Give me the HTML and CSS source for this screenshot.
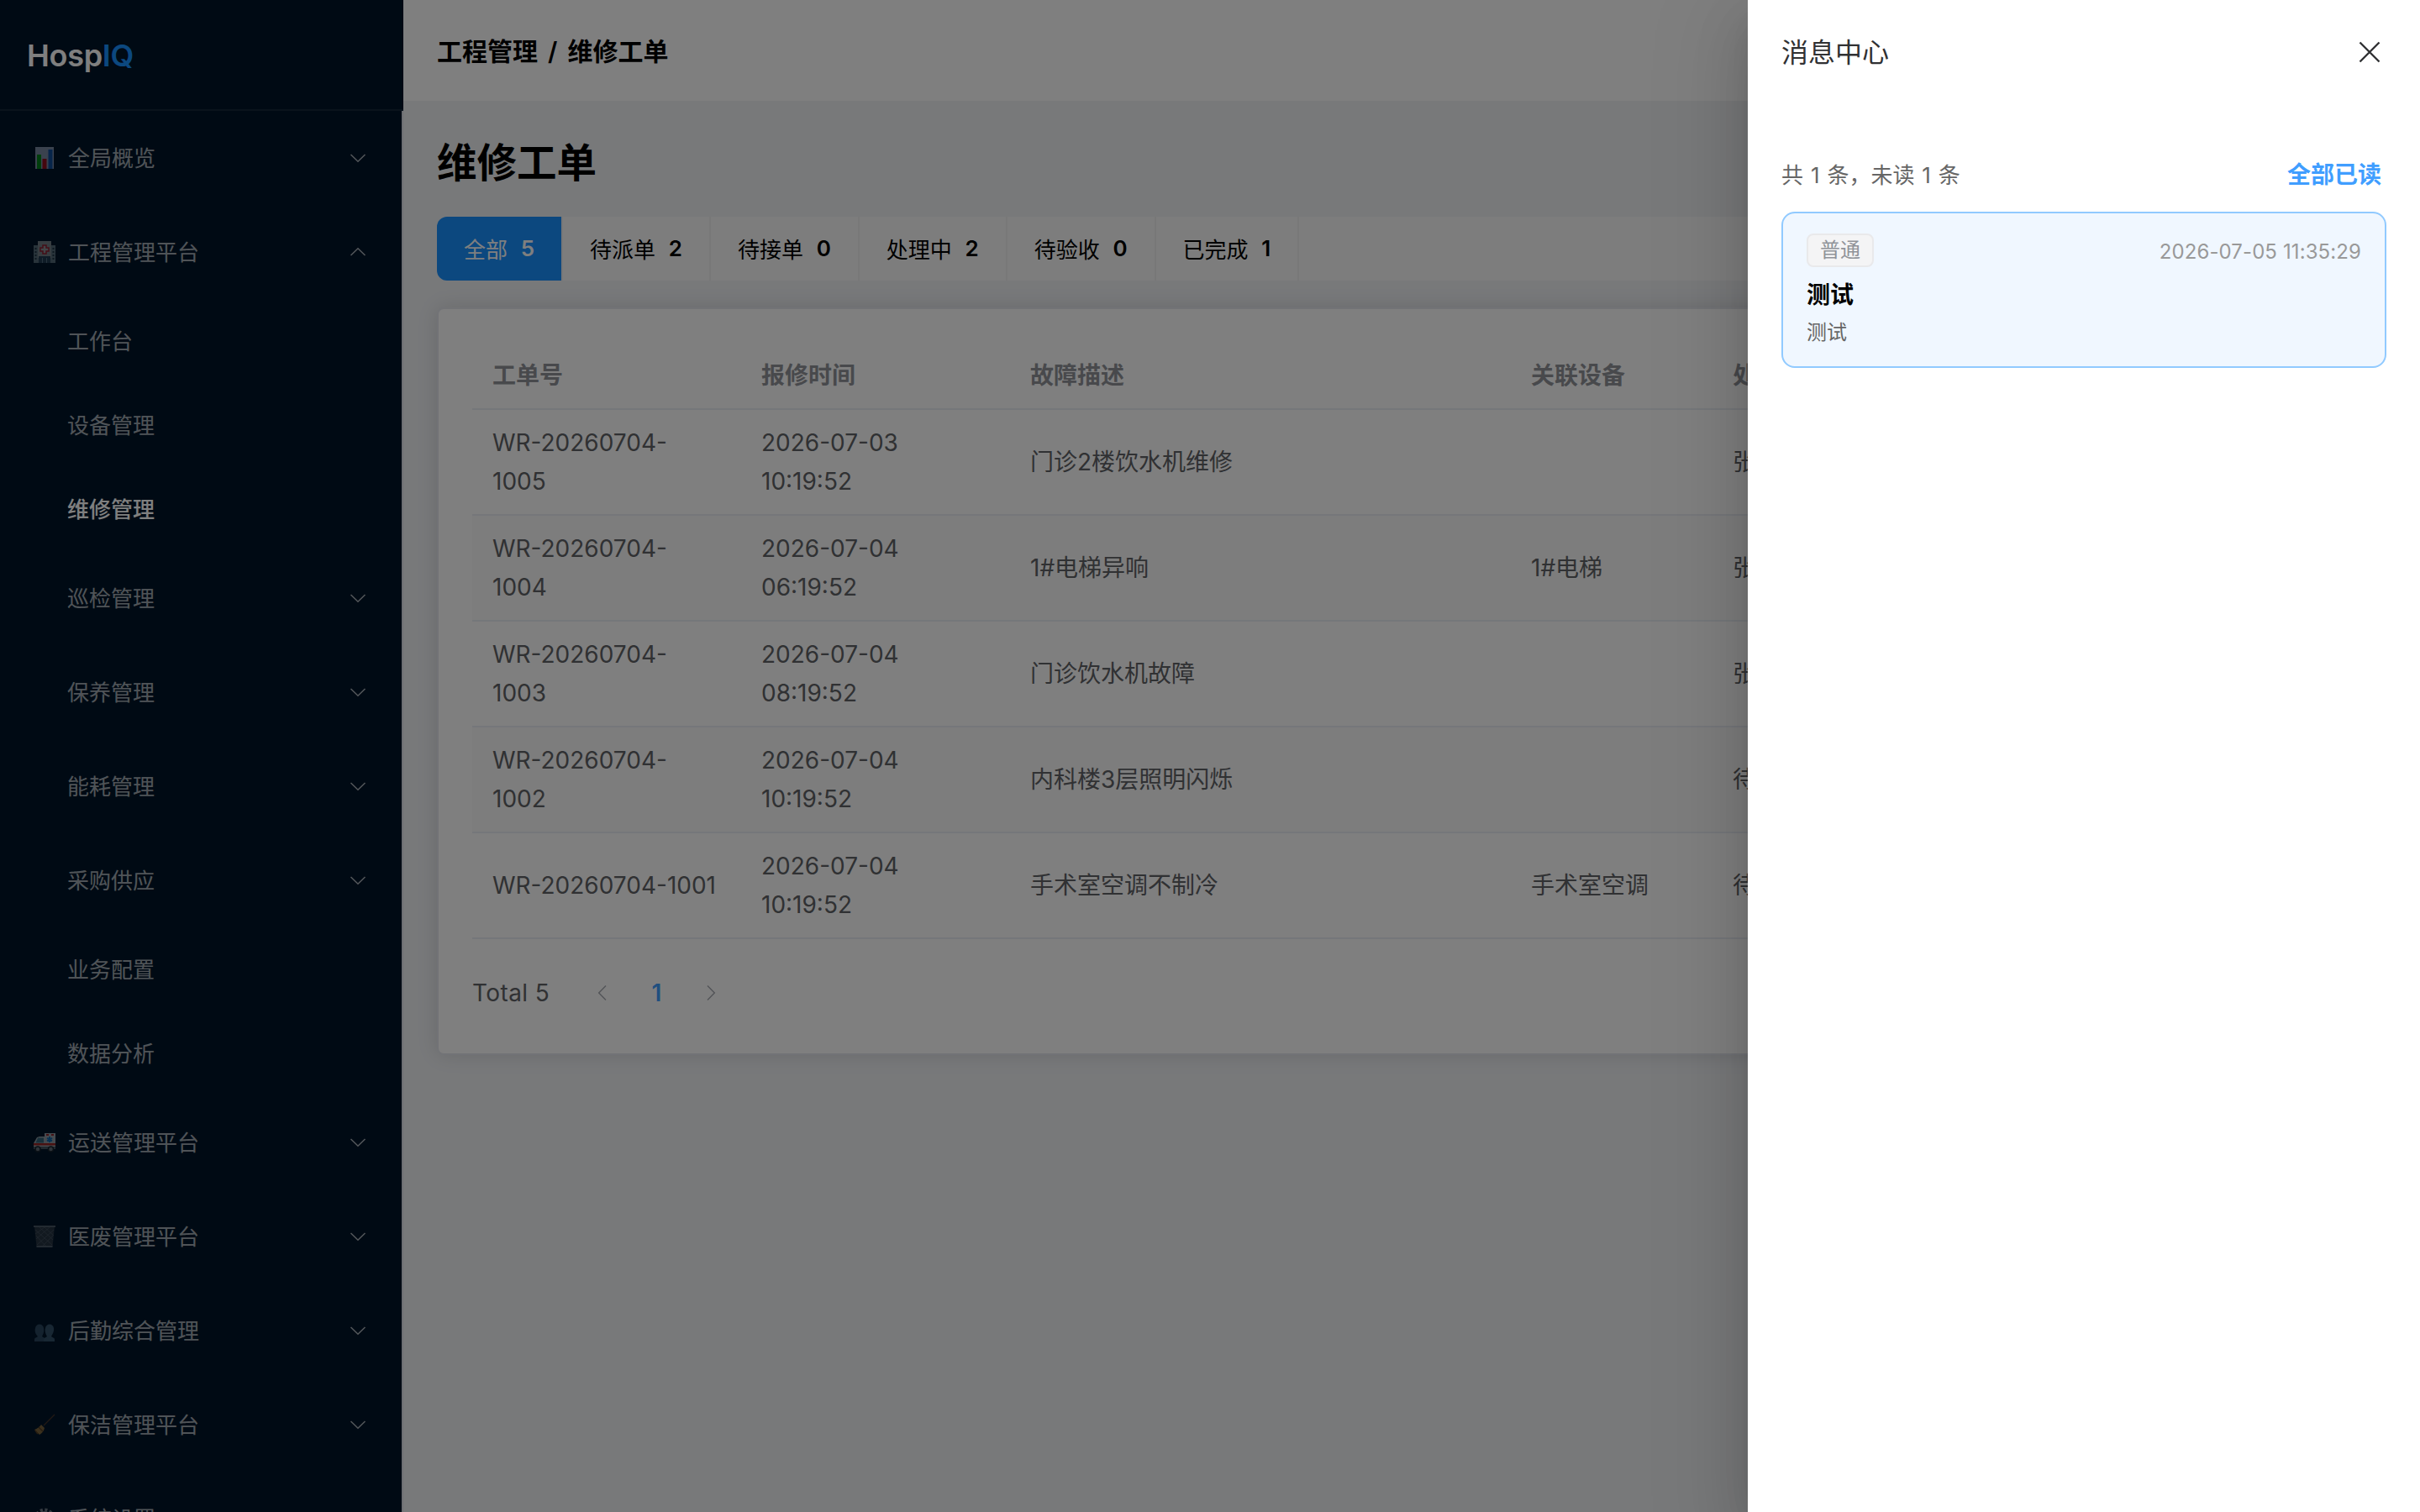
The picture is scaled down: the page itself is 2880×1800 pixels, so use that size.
FILE: index.html
```html
<!DOCTYPE html>
<html lang="zh-CN">
<head>
    <meta charset="UTF-8">
    <meta name="viewport" content="width=device-width, initial-scale=1.0">
    <title>HospIQ - 维修工单</title>
    <link rel="stylesheet" href="styles.css">
</head>
<body>
    <svg class="defs">
        <symbol id="arrow" viewBox="0 0 24 24"><path d="M3.5 8 L12 16.3 L20.5 8" fill="none" stroke="currentColor" stroke-width="1.5"/></symbol>
    </svg>
    <div class="app">
        <aside class="sidebar">
            <div class="logo">Hosp<span>IQ</span></div>
            <nav class="menu">
                <div class="menu-item top">
                    <svg class="emoji" viewBox="0 0 26 26">
                        <rect x="2" y="0" width="22" height="26" fill="#b4c0dc"/>
                        <rect x="4" y="9" width="5" height="17" fill="#00b30f"/>
                        <rect x="10.5" y="14" width="5" height="12" fill="#d40c18"/>
                        <rect x="17.5" y="3" width="5" height="23" fill="#1668cf"/>
                    </svg>
                    <span>全局概览</span>
                    <svg class="arrow"><use href="#arrow"/></svg>
                </div>
                <div class="menu-item top">
                    <svg class="emoji" viewBox="0 0 26 26">
                        <rect x="0" y="5" width="26" height="21" fill="#7d949c"/>
                        <rect x="5" y="0" width="16" height="20" fill="#a9b0b4"/>
                        <path d="M2.5 8v16M23.5 8v16" stroke="#2c4450" stroke-width="2" stroke-dasharray="2 2"/>
                        <path d="M11 5h4v3h3v4h-3v3h-4v-3h-3v-4h3z" fill="#c9c9c9" stroke="#d02030" stroke-width="1.5"/>
                        <rect x="6" y="18" width="14" height="8" fill="#2f4d63"/>
                        <path d="M10.5 20v6M15.5 20v6" stroke="#7594a8"/>
                    </svg>
                    <span>工程管理平台</span>
                    <svg class="arrow up"><use href="#arrow"/></svg>
                </div>
                <div class="menu-item sub"><span>工作台</span></div>
                <div class="menu-item sub"><span>设备管理</span></div>
                <div class="menu-item sub active"><span>维修管理</span></div>
                <div class="menu-item group"><span>巡检管理</span><svg class="arrow"><use href="#arrow"/></svg></div>
                <div class="menu-item group"><span>保养管理</span><svg class="arrow"><use href="#arrow"/></svg></div>
                <div class="menu-item group"><span>能耗管理</span><svg class="arrow"><use href="#arrow"/></svg></div>
                <div class="menu-item group"><span>采购供应</span><svg class="arrow"><use href="#arrow"/></svg></div>
                <div class="menu-item sub"><span>业务配置</span></div>
                <div class="menu-item sub"><span>数据分析</span></div>
                <div class="menu-item top">
                    <svg class="emoji" viewBox="0 0 26 26">
                        <path d="M13 2h13v19H0v-7l4-7 3-1h6z" fill="#d5dade"/>
                        <path d="M5 7.5h7v6H2.5z" fill="#4d8ba1"/>
                        <path d="M0 14h26v2.5H0z" fill="#e02a1f"/>
                        <path d="M15 3h3v2h-3zM21 3h3v2h-3z" fill="#d42a2a"/>
                        <path d="M19 6v7M16 7.800l6 3.500M22 7.800l-6 3.500" stroke="#1b8ee8" stroke-width="2"/>
                        <rect x="0" y="18" width="26" height="3" fill="#66717a"/>
                        <circle cx="5" cy="21" r="3" fill="#8b9299" stroke="#20262b" stroke-width="1.5"/>
                        <circle cx="20.5" cy="21" r="3" fill="#8b9299" stroke="#20262b" stroke-width="1.5"/>
                    </svg>
                    <span>运送管理平台</span>
                    <svg class="arrow"><use href="#arrow"/></svg>
                </div>
                <div class="menu-item top">
                    <svg class="emoji" viewBox="0 0 26 26">
                        <path d="M1 1h24l-2.5 24h-19z" fill="#39424d"/>
                        <path d="M2 5l20 18M7 2l16 15M13 2l11 10M3 12l12 13M24 5L4 23M19 2L3 16M13 2L2 10M23 12L10 25" stroke="#66717e" stroke-width=".7"/>
                        <path d="M0 1h26M3.5 25h19" stroke="#6d7782" stroke-width="2"/>
                    </svg>
                    <span>医废管理平台</span>
                    <svg class="arrow"><use href="#arrow"/></svg>
                </div>
                <div class="menu-item top">
                    <svg class="emoji" viewBox="0 0 26 26">
                        <path d="M1 26v-3c0-1 3-2 4-3-3-3-4-7-3-10 1-6 9-6 10 0 .6 3 0 7-2 10 1 1 4 2 4 3v3z" fill="#3f6079"/>
                        <path d="M12 26v-3c0-1 3-2 4-3-2-3-3-7-2-10 1-6 9-6 10 0 .6 3-1 7-3 10 1 1 4 2 4 3v3z" fill="#4b6d87"/>
                    </svg>
                    <span>后勤综合管理</span>
                    <svg class="arrow"><use href="#arrow"/></svg>
                </div>
                <div class="menu-item top">
                    <svg class="emoji" viewBox="0 0 26 26">
                        <path d="M25 1L12 14" stroke="#6b4428" stroke-width="1.2"/>
                        <path d="M9 13l4 4c-1 4-3 6-6 8l-6-6c3-1 6-3 8-6z" fill="#b58b45"/>
                        <path d="M6 16l5 5M2 20l3 4" stroke="#7a501f" stroke-width="1.5"/>
                    </svg>
                    <span>保洁管理平台</span>
                    <svg class="arrow"><use href="#arrow"/></svg>
                </div>
                <div class="menu-item top">
                    <svg class="emoji" viewBox="0 0 26 26">
                        <circle cx="13" cy="13" r="10.5" fill="none" stroke="#a0a8b0" stroke-width="4" stroke-dasharray="3 2.5"/>
                        <circle cx="13" cy="13" r="7.5" fill="none" stroke="#a0a8b0" stroke-width="3"/>
                    </svg>
                    <span>系统设置</span>
                    <svg class="arrow"><use href="#arrow"/></svg>
                </div>
            </nav>
        </aside>

        <div class="main">
            <header class="header">工程管理 / 维修工单</header>
            <main class="content">
                <h1>维修工单</h1>
                <div class="tabs">
                    <div class="tab active">全部<b>5</b></div>
                    <div class="tab">待派单<b>2</b></div>
                    <div class="tab">待接单<b>0</b></div>
                    <div class="tab">处理中<b>2</b></div>
                    <div class="tab">待验收<b>0</b></div>
                    <div class="tab">已完成<b>1</b></div>
                </div>
                <section class="card">
                    <table class="table">
                        <colgroup><col class="c-no"><col class="c-time"><col class="c-desc"><col class="c-dev"><col></colgroup>
                        <thead>
                            <tr><th>工单号</th><th>报修时间</th><th>故障描述</th><th>关联设备</th><th>处理人</th></tr>
                        </thead>
                        <tbody>
                            <tr><td>WR-20260704-<br>1005</td><td>2026-07-03<br>10:19:52</td><td>门诊2楼饮水机维修</td><td></td><td>张工</td></tr>
                            <tr><td>WR-20260704-<br>1004</td><td>2026-07-04<br>06:19:52</td><td>1#电梯异响</td><td>1#电梯</td><td>张工</td></tr>
                            <tr><td>WR-20260704-<br>1003</td><td>2026-07-04<br>08:19:52</td><td>门诊饮水机故障</td><td></td><td>张工</td></tr>
                            <tr><td>WR-20260704-<br>1002</td><td>2026-07-04<br>10:19:52</td><td>内科楼3层照明闪烁</td><td></td><td>待派</td></tr>
                            <tr><td>WR-20260704-1001</td><td>2026-07-04<br>10:19:52</td><td>手术室空调不制冷</td><td>手术室空调</td><td>待派</td></tr>
                        </tbody>
                    </table>
                    <div class="pagination">
                        <span class="total">Total 5</span>
                        <svg class="arrow prev"><use href="#arrow"/></svg>
                        <span class="page">1</span>
                        <svg class="arrow next"><use href="#arrow"/></svg>
                    </div>
                </section>
            </main>
        </div>
    </div>

    <div class="overlay">
        <aside class="drawer">
            <div class="drawer-header">
                <span class="drawer-title">消息中心</span>
                <svg class="close" viewBox="0 0 40 40"><path d="M8.5 8.5l23 23M31.5 8.5l-23 23" stroke="currentColor" stroke-width="2.4"/></svg>
            </div>
            <div class="drawer-body">
                <div class="summary">
                    <span>共 1 条，未读 1 条</span>
                    <span class="read-all">全部已读</span>
                </div>
                <article class="message">
                    <div class="message-top">
                        <span class="tag">普通</span>
                        <time>2026-07-05 11:35:29</time>
                    </div>
                    <div class="message-title">测试</div>
                    <div class="message-text">测试</div>
                </article>
            </div>
        </aside>
    </div>
</body>
</html>
```
FILE: styles.css
```css
* {
    box-sizing: border-box;
}
body {
    margin: 0;
    height: 100vh;
    overflow: hidden;
    font-family: Inter, "Noto Sans CJK SC", sans-serif;
    font-size: 28px;
    background: #f0f2f5;
}
.defs {
    display: none;
}
.app {
    display: flex;
    height: 1800px;
    overflow: hidden;
}

/* sidebar */
.sidebar {
    width: 480px;
    flex: none;
    display: flex;
    flex-direction: column;
    height: 1800px;
}
.logo {
    height: 132px;
    flex: none;
    padding: 1px 0 0 32px;
    line-height: 130px;
    font-size: 36px;
    font-weight: 600;
    letter-spacing: -0.3px;
    color: #fff;
    background: #001529;
    border-bottom: 2px solid #142738;
}
.logo span {
    color: #1890ff;
}
.menu {
    flex: 1;
    overflow: hidden;
    background: #001529;
    border-right: 2px solid #dcdfe6;
}
.menu-item {
    display: flex;
    align-items: center;
    height: 112px;
    padding: 0 40px;
    font-size: 26px;
    color: rgba(255, 255, 255, 0.65);
}
.menu-item span {
    padding-bottom: 3px;
}
.menu-item.group,
.menu-item.sub {
    padding-left: 80px;
}
.menu-item.sub {
    height: 100px;
}
.menu-item.active {
    color: #fff;
    font-weight: 500;
}
.emoji {
    width: 26px;
    height: 26px;
    margin-right: 15px;
    opacity: 0.65;
}
.arrow {
    width: 24px;
    height: 24px;
}
.menu-item .arrow {
    margin-left: auto;
}
.arrow.up {
    transform: rotate(180deg);
}

/* main */
.main {
    flex: 1;
}
.header {
    height: 120px;
    padding: 1px 40px 0;
    line-height: 120px;
    font-size: 30px;
    font-weight: 600;
    word-spacing: 4.5px;
    background: #fff;
}
.content {
    padding: 40px;
}
h1 {
    margin: 0 0 32px;
    padding-top: 2px;
    font-size: 47.5px;
    line-height: 64px;
    font-weight: 700;
}
.tabs {
    display: flex;
    height: 76px;
    margin-bottom: 32px;
    background: #fafafa;
    border-radius: 12px;
    overflow: hidden;
}
.tab {
    display: flex;
    align-items: center;
    gap: 15.7px;
    padding: 0 32px 2px;
    font-size: 26px;
    border-right: 2px solid #f0f0f0;
}
.tab b {
    font-weight: 600;
}
.tab.active {
    color: #fff;
    background: #1890ff;
    background-clip: padding-box;
}
.card {
    height: 890px;
    padding: 40px;
    background: #fff;
    border: 2px solid #e4e7ed;
    border-radius: 8px;
    box-shadow: 0 0 24px rgba(0, 0, 0, 0.12);
}
.table {
    width: 100%;
    table-layout: fixed;
    border-collapse: separate;
    border-spacing: 0;
    line-height: 46px;
    color: #606266;
}
.c-no,
.c-time {
    width: 320px;
}
.c-desc {
    width: 596px;
}
.c-dev {
    width: 240px;
}
th,
td {
    padding: 16px 24px;
    text-align: left;
    vertical-align: middle;
    border-bottom: 2px solid #ebeef5;
}
th {
    height: 80px;
    font-weight: 600;
    color: #909399;
}
td {
    height: 126px;
}
tbody tr:nth-child(even) td {
    background: #fafafa;
}
.pagination {
    display: flex;
    align-items: center;
    height: 64px;
    margin-top: 32px;
    color: #606266;
}
.total {
    width: 143px;
    letter-spacing: 0.4px;
}
.pagination .arrow {
    color: #a8abb2;
}
.prev {
    transform: rotate(90deg);
}
.next {
    transform: rotate(-90deg);
}
.page {
    width: 105px;
    text-align: center;
    font-weight: 600;
    color: #409eff;
}

/* message drawer */
.overlay {
    position: absolute;
    inset: 0;
    display: flex;
    justify-content: flex-end;
    overflow: hidden;
    background: rgba(0, 0, 0, 0.5);
}
.drawer {
    width: 800px;
    background: #fff;
    box-shadow: 0 32px 96px 32px rgba(0, 0, 0, 0.08), 0 24px 64px rgba(0, 0, 0, 0.12), 0 16px 32px -16px rgba(0, 0, 0, 0.16);
}
.drawer-header {
    display: flex;
    justify-content: space-between;
    align-items: center;
    height: 124px;
    padding: 0 40px;
    font-size: 32px;
    color: #303133;
}
.drawer-title {
    padding-bottom: 4px;
}
.close {
    width: 40px;
    height: 40px;
}
.drawer-body {
    padding: 54px 40px;
}
.summary {
    display: flex;
    justify-content: space-between;
    align-items: center;
    height: 56px;
    margin-bottom: 18px;
    padding-right: 6px;
    font-size: 26px;
    word-spacing: 1.6px;
    color: #666;
}
.read-all {
    font-size: 28px;
    font-weight: 600;
    color: #409eff;
}
.message {
    height: 186px;
    padding: 24px 28px;
    background: #f0f7ff;
    border: 2px solid #91caff;
    border-radius: 16px;
}
.message-top {
    display: flex;
    justify-content: space-between;
    align-items: center;
    height: 40px;
}
.tag {
    padding: 0 14px;
    font-size: 24px;
    line-height: 36px;
    color: #909399;
    background: #f4f4f5;
    border: 2px solid #e9e9eb;
    border-radius: 8px;
}
time {
    padding-top: 2px;
    font-size: 24px;
    letter-spacing: 0.1px;
    color: #999;
}
.message-title {
    margin-top: 11px;
    line-height: 44px;
    font-weight: 700;
    color: #000;
}
.message-text {
    margin-top: 4px;
    font-size: 24px;
    line-height: 38px;
    color: #666;
}
```
